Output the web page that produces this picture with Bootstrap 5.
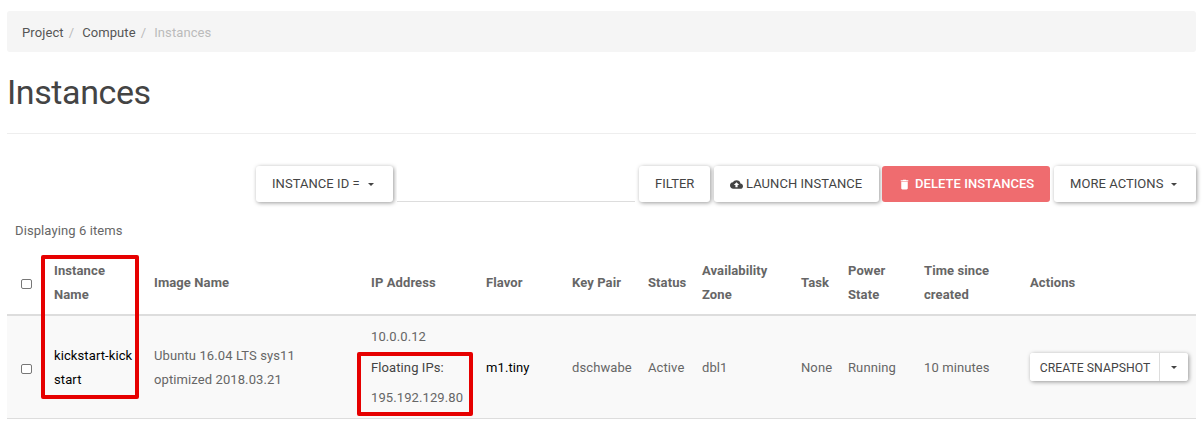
<!DOCTYPE html>
<html lang="en">
<head>
<meta charset="utf-8">
<meta name="viewport" content="width=device-width, initial-scale=1">
<title>Instances</title>
<link href="https://cdn.jsdelivr.net/npm/bootstrap@5.3.0/dist/css/bootstrap.min.css" rel="stylesheet">
<style>
body{font:400 13px/24px Roboto,"Liberation Sans",sans-serif;letter-spacing:.1px;color:#666;background:#fff;overflow:hidden}
.page{padding:11px 6px 0 7px}
.crumbs{--bs-breadcrumb-divider-color:#bbb;background:#f5f5f5;height:41px;padding:10px 15px 7px;border-radius:3px;font-size:13px;margin:0}
.crumbs a{color:#555;text-decoration:none}
.crumbs .breadcrumb-item+.breadcrumb-item{padding-left:5px}
.crumbs .breadcrumb-item+.breadcrumb-item::before{padding-right:8px}
.crumbs .active{color:#bbb}
.title-bar{height:82px;padding-top:22px;border-bottom:1px solid #eee}
.title-bar h1{font-size:34px;line-height:37px;font-weight:400;letter-spacing:-.4px;color:#444;margin:0}
.toolbar{margin-top:32px;height:36px}
.btn-paper{--bs-btn-font-size:13px;--bs-btn-line-height:24px;--bs-btn-padding-y:6px;--bs-btn-padding-x:16px;--bs-btn-color:#444;--bs-btn-bg:#fff;--bs-btn-border-width:0;--bs-btn-border-radius:3px;--bs-btn-hover-bg:#f5f5f5;text-transform:uppercase;letter-spacing:.05px;white-space:nowrap;box-shadow:1px 1px 4px rgba(0,0,0,.4);display:inline-flex;align-items:center;height:36px}
.btn-paper.dropdown-toggle::after{border-width:3px 3px 0;margin-left:8px;margin-top:1px}
.btn-remove{--bs-btn-color:#fff;--bs-btn-bg:#ef6c6f;--bs-btn-hover-bg:#e8575a;--bs-btn-hover-color:#fff;box-shadow:none;font-weight:500}
.search-field{width:238px;height:36px;border:0;border-bottom:1px solid #ddd;border-radius:0;padding:0}
.summary-line{margin:17px 0 0;padding-left:8px}
.grid-table{--bs-table-bg:transparent;--bs-table-color:#666;color:#666;table-layout:fixed;margin:0;width:1189px}
.grid-table>:not(caption)>*>*{padding:0 8px;vertical-align:middle;border-bottom:1px solid #ddd;letter-spacing:.1px}
.grid-table>thead>tr>th{height:72px;border-bottom:2px solid #ddd;font-weight:700;padding-top:8px}
.grid-table>tbody>tr>td{height:103px;background:#f9f9f9;padding-top:3px}
.grid-table>tbody>tr>.tall-cell{padding-top:1px}
.grid-table input{display:block;appearance:none;width:11px;height:10px;border:1px solid #777;border-radius:2px;background:#fff;margin:1px 0 0 6px}
.grid-table th input{margin-top:3px}
.link-cell{color:#000;text-decoration:none}
.float-label{color:#444;margin:7px 0 6px}
.btn-row{--bs-btn-font-size:12.2px;height:28px}
.btn-row.dropdown-toggle::after{margin-left:0}
.split-actions{width:158px;border-radius:3px;background:#fff;box-shadow:1px 1px 4px rgba(0,0,0,.4)}
.split-actions .btn-row{box-shadow:none;width:129px;justify-content:center;padding:2px 0 0 1px}
.split-actions .btn-row+.btn-row{width:29px;padding:0;border-left:1px solid #ddd;border-radius:0 3px 3px 0}
.marker{position:absolute;border:4px solid #e60000;border-radius:2px;pointer-events:none}
.marker-name{left:-13px;top:-89px;width:98px;height:144px}
.marker-ip{left:-14px;top:-4px;width:116px;height:64px}
</style>
</head>
<body>
<main class="page">
<nav aria-label="breadcrumb"><ol class="breadcrumb crumbs">
<li class="breadcrumb-item"><a href="#">Project</a></li><li class="breadcrumb-item"><a href="#">Compute</a></li><li class="breadcrumb-item active">Instances</li>
</ol></nav>
<header class="title-bar"><h1>Instances</h1></header>
<div class="toolbar d-flex justify-content-end">
<button class="btn btn-paper dropdown-toggle" style="width:137px">Instance ID =</button>
<input class="form-control search-field ms-1 me-1 flex-shrink-0" aria-label="Search">
<button class="btn btn-paper" style="width:71px">Filter</button>
<button class="btn btn-paper ms-1" style="width:165px"><svg class="flex-shrink-0" style="margin-right:3px" width="13" height="13" viewBox="0 0 24 24" fill="currentColor"><path d="M19.35 10.04A7.49 7.49 0 0 0 12 4C9.11 4 6.6 5.64 5.35 8.04A5.994 5.994 0 0 0 0 14c0 3.31 2.69 6 6 6h13c2.76 0 5-2.24 5-5 0-2.64-2.05-4.78-4.65-4.96zM14 13v4h-4v-4H7l5-5 5 5h-3z"/></svg>Launch Instance</button>
<button class="btn btn-paper btn-remove" style="width:168px;margin-left:3px"><svg class="flex-shrink-0" style="margin-right:4px" width="13" height="13" viewBox="0 0 24 24" fill="currentColor"><path d="M6 19c0 1.1.9 2 2 2h8c1.1 0 2-.9 2-2V7H6v12zM19 4h-3.500l-1-1h-5l-1 1H5v2h14V4z"/></svg>Delete Instances</button>
<button class="btn btn-paper dropdown-toggle ms-1" style="width:142px">More Actions</button>
</div>
<p class="summary-line">Displaying 6 items</p>
<table class="table grid-table">
<colgroup><col style="width:39px"><col style="width:100px"><col style="width:217px"><col style="width:115px"><col style="width:86px"><col style="width:76px"><col style="width:54px"><col style="width:99px"><col style="width:47px"><col style="width:76px"><col style="width:106px"><col style="width:174px"></colgroup>
<thead><tr><th><input type="checkbox" aria-label="Select all"></th><th>Instance Name</th><th>Image Name</th><th>IP Address</th><th>Flavor</th><th>Key Pair</th><th>Status</th><th>Availability Zone</th><th>Task</th><th>Power State</th><th>Time since created</th><th>Actions</th></tr></thead>
<tbody><tr><td><input type="checkbox" aria-label="Select kickstart-kickstart"></td>
<td><div class="position-relative"><a class="link-cell" href="#">kickstart-kick<br>start</a><span class="marker marker-name"></span></div></td>
<td>Ubuntu 16.04 LTS sys11<br>optimized 2018.03.21</td>
<td class="tall-cell"><div>10.0.0.12</div><div class="position-relative"><div class="float-label">Floating IPs:</div><div>195.192.129.80</div><span class="marker marker-ip"></span></div></td>
<td><a class="link-cell" href="#">m1.tiny</a></td><td class="text-nowrap">dschwabe</td><td>Active</td><td>dbl1</td><td>None</td><td>Running</td><td>10 minutes</td>
<td class="tall-cell"><div class="d-flex split-actions"><button class="btn btn-paper btn-row">Create Snapshot</button><button class="btn btn-paper btn-row dropdown-toggle" aria-label="More"></button></div></td></tr></tbody>
</table>
</main>
<script src="https://cdn.jsdelivr.net/npm/bootstrap@5.3.0/dist/js/bootstrap.bundle.min.js"></script>
</body>
</html>
